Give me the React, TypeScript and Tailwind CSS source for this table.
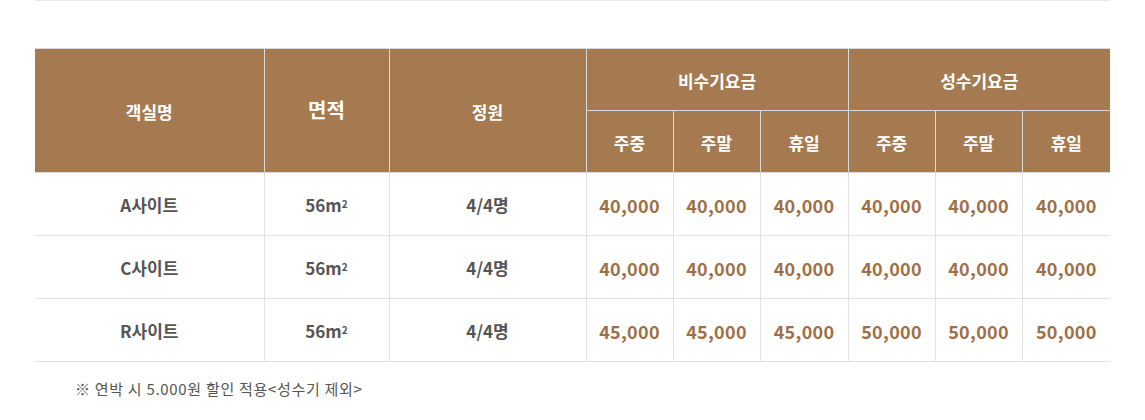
const font = "font-['Noto_Sans_CJK_KR','Noto_Sans',sans-serif]";

const rows = [
  { name: 'A사이트', prices: ['40,000', '40,000', '40,000', '40,000', '40,000', '40,000'] },
  { name: 'C사이트', prices: ['40,000', '40,000', '40,000', '40,000', '40,000', '40,000'] },
  { name: 'R사이트', prices: ['45,000', '45,000', '45,000', '50,000', '50,000', '50,000'] },
];

const days = ['주중', '주말', '휴일', '주중', '주말', '휴일'];
const widths = ['w-[229px]', 'w-[125px]', 'w-[197px]', 'w-[87px]', 'w-[87px]', 'w-[88px]', 'w-[87px]', 'w-[87px]', 'w-[88px]'];

export default function App() {
  return (
    <div className={`min-h-[420px] bg-white px-[35px] ${font}`}>
      <div className="w-[1075px] h-px bg-[#e6e6e6]" />
      <table className="mt-[47px] w-[1075px] table-fixed border-collapse">
        <colgroup>
          {widths.map((w, i) => (
            <col key={i} className={w} />
          ))}
        </colgroup>
        <thead className="bg-[#a57a50] text-white font-bold">
          <tr className="h-[62px]">
            <th rowSpan={2} className="border border-[#d9d9d9] border-l-0 pt-[3px] text-[17px]">객실명</th>
            <th rowSpan={2} className="border border-[#d9d9d9] pb-[2px] text-[20px]">면적</th>
            <th rowSpan={2} className="border border-[#d9d9d9] pt-[3px] text-[17px]">정원</th>
            <th colSpan={3} className="border border-[#d9d9d9] pt-[3px] text-[17px]">비수기요금</th>
            <th colSpan={3} className="border border-[#d9d9d9] border-r-0 pt-[3px] text-[17px]">성수기요금</th>
          </tr>
          <tr className="h-[62px]">
            {days.map((d, i) => (
              <th key={i} className={`border border-[#d9d9d9] pt-[3px] text-[17px] ${i === 5 ? 'border-r-0' : ''}`}>
                {d}
              </th>
            ))}
          </tr>
        </thead>
        <tbody className="font-bold">
          {rows.map((r) => (
            <tr key={r.name} className="h-[63px]">
              <td className="border border-[#e1e1e1] border-l-0 pt-[2px] text-center text-[17px] text-[#555]">{r.name}</td>
              <td className="border border-[#e1e1e1] pt-[2px] text-center text-[17px] text-[#555]">
                56m<sup className="relative -top-[4px] text-[10px]">2</sup>
              </td>
              <td className="border border-[#e1e1e1] pt-[2px] text-center text-[17px] text-[#555]">4/4명</td>
              {r.prices.map((p, i) => (
                <td
                  key={i}
                  className={`border border-[#e1e1e1] pt-[2px] text-center text-[18px] font-semibold tracking-[0.3px] text-[#9e7048] ${i === 5 ? 'border-r-0' : ''}`}
                >
                  {p}
                </td>
              ))}
            </tr>
          ))}
        </tbody>
      </table>
      <p className="mt-[16px] pl-[40px] text-[15px] tracking-[0.7px] text-[#555]">※ 연박 시 5.000원 할인 적용&lt;성수기 제외&gt;</p>
    </div>
  );
}
